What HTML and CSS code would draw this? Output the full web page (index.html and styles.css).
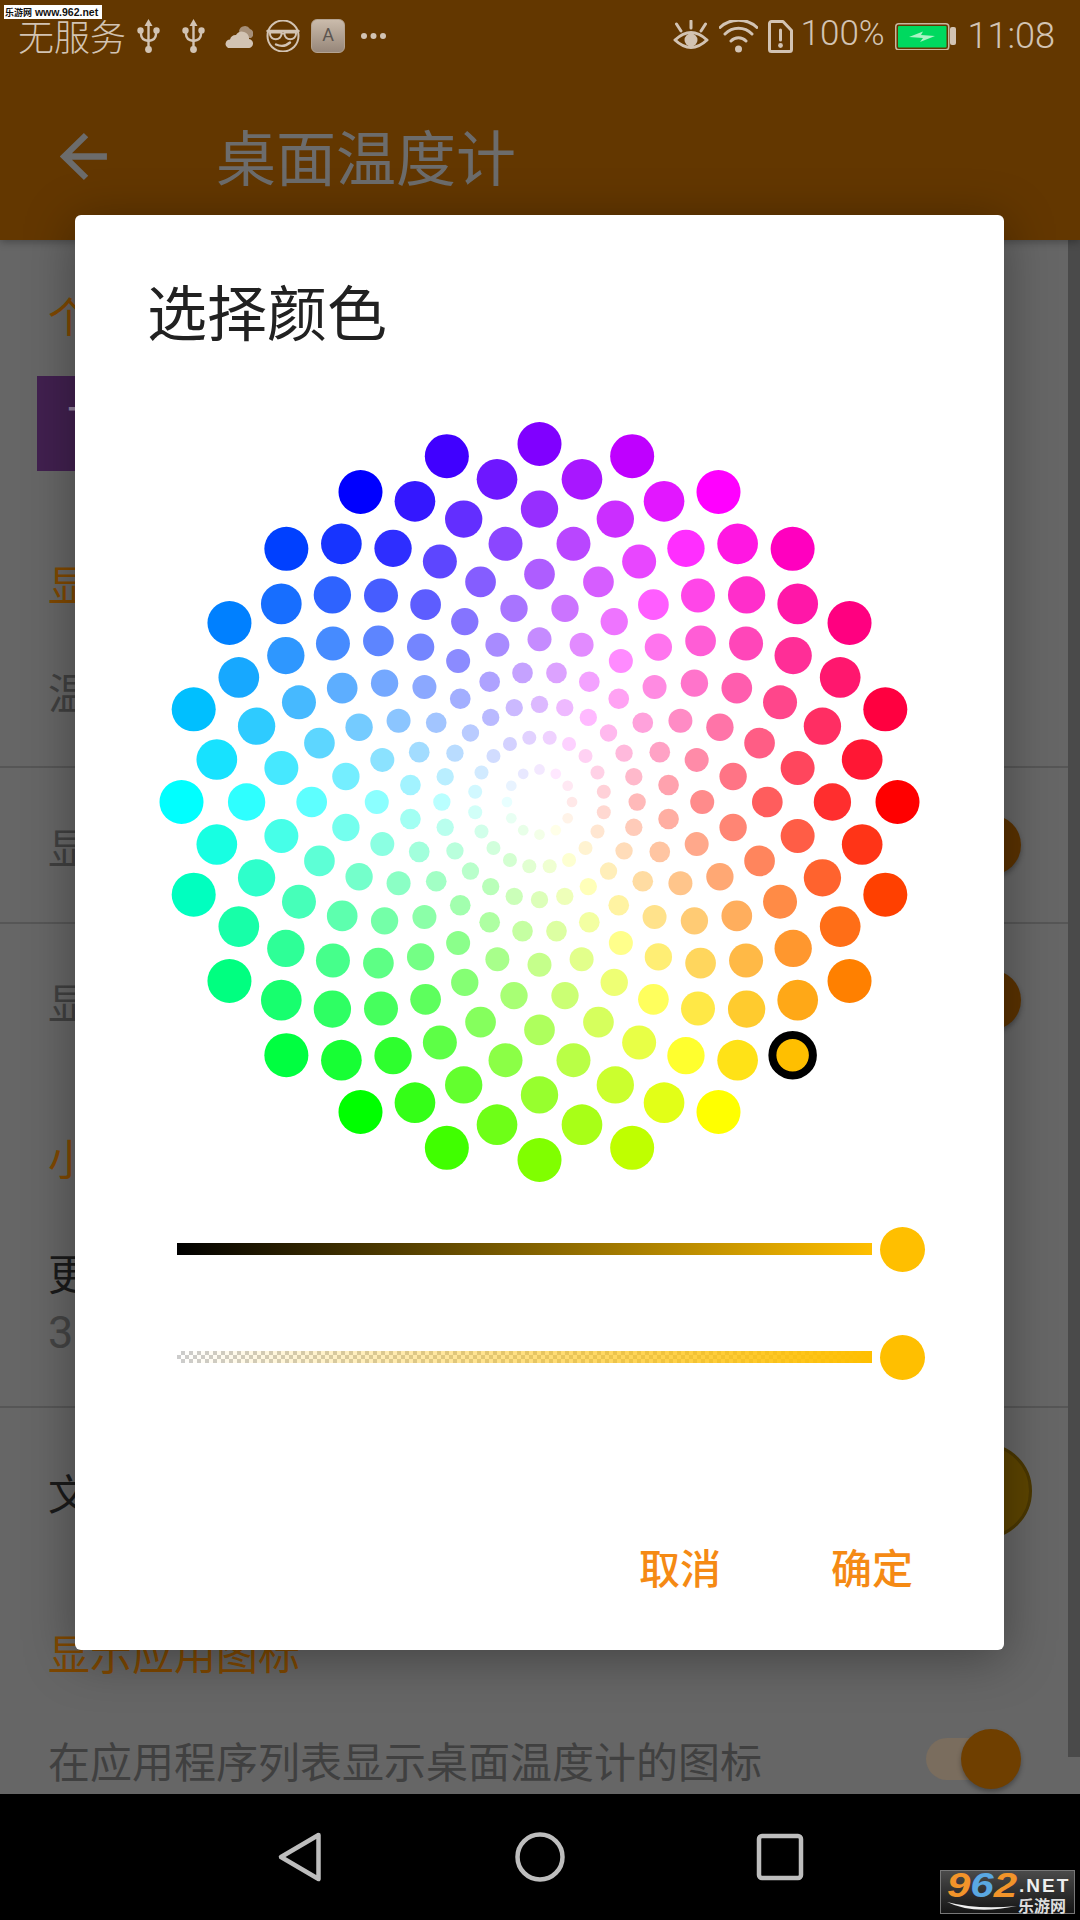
FILE: index.html
```html
<!DOCTYPE html>
<html lang="zh-CN">
<head>
<meta charset="utf-8">
<title>选择颜色</title>
<link rel="stylesheet" href="styles.css">
</head>
<body>
<div class="screen">
  <header class="appbar">
    <div class="status">
      <div class="status-group">
        <span class="carrier">无服务</span>
        <svg class="ic-usb ic-usb-a" viewBox="0 0 23 34"><path class="s2" d="M11.5 4V30M4 12v3q0 6 7.5 7q7.5-1 7.5-7v-3"/><path class="f" d="M11.5 0L7.5 7H15.5Z"/><circle class="f" cx="11.5" cy="30.5" r="3.4"/><circle class="f" cx="3.5" cy="11.5" r="3.2"/><circle class="f" cx="19.5" cy="11.5" r="3.2"/></svg>
        <svg class="ic-usb ic-usb-b" viewBox="0 0 23 34"><path class="s2" d="M11.5 4V30M4 12v3q0 6 7.5 7q7.5-1 7.5-7v-3"/><path class="f" d="M11.5 0L7.5 7H15.5Z"/><circle class="f" cx="11.5" cy="30.5" r="3.4"/><circle class="f" cx="3.5" cy="11.5" r="3.2"/><circle class="f" cx="19.5" cy="11.5" r="3.2"/></svg>
        <svg class="ic-cloud" viewBox="0 0 30 23"><path class="f-back" d="M16 6a6 6 0 0 1 11-2a5 5 0 0 1 1 9h-9z"/><path class="f" d="M5 23h20a4.500 4.500 0 0 0 1-9a7 7 0 0 0-13-4a6 6 0 0 0-6 4.500a4.500 4.500 0 0 0-2 8.500z"/></svg>
        <svg class="ic-face" viewBox="0 0 34 32"><circle class="s1" cx="17" cy="16" r="15.500"/><path class="s2" d="M1.500 11H32.500"/><path class="s1" d="M4 12.500h11.500v1.500a5 4.500 0 0 1-11.500 0zM18.500 12.500H30v1.500a5 4.500 0 0 1-11.500 0zM15.500 13.500h3"/><path class="s2" d="M10 24.500q8 3.500 14-2"/></svg>
        <span class="ic-app">A</span>
        <svg class="ic-more" viewBox="0 0 25 8"><circle class="f" cx="3" cy="4" r="3"/><circle class="f" cx="12.500" cy="4" r="3"/><circle class="f" cx="22" cy="4" r="3"/></svg>
      </div>
      <div class="status-group">
        <svg class="ic-eye" viewBox="0 0 36 32"><path class="s3" d="M2 20q16-15 32 0q-16 15-32 0z"/><circle class="f" cx="18" cy="20" r="6.500"/><path class="s3" d="M18 1V8M3.500 4L8 11M32.500 4L28 11"/></svg>
        <svg class="ic-wifi" viewBox="0 0 39 33"><circle class="f" cx="19.500" cy="29" r="3.500"/><path class="s3" d="M12 21a10.500 10.500 0 0 1 15 0M6 14a19 19 0 0 1 27 0M1 7.500a27 27 0 0 1 37 0"/></svg>
        <svg class="ic-sim" viewBox="0 0 25 33"><path class="s3" d="M4 1.500h11l8.500 9v19a2 2 0 0 1-2 2h-18a2 2 0 0 1-2-2v-26a2 2 0 0 1 2-2z"/><path class="s3" d="M12.500 10v10"/><circle class="f" cx="12.500" cy="25.500" r="2.400"/></svg>
        <span class="pct">100%</span>
        <svg class="ic-batt" viewBox="0 0 61 27"><rect class="batt-frame" x="0.750" y="0.750" width="53" height="26" rx="3"/><rect class="batt-fill" x="3" y="3" width="48.500" height="21.500" rx="1"/><path class="batt-bolt" d="M14 14L28 8.500L26 12L40 13L25 19L28 15z"/><rect class="f" x="55" y="4" width="6" height="18" rx="2"/></svg>
        <span class="clock">11:08</span>
      </div>
    </div>
    <div class="toolbar">
      <svg class="ic-back" viewBox="0 0 47 47"><path d="M45 23.500H5M25 3L4 23.500L25 44"/></svg>
      <span class="toolbar-title">桌面温度计</span>
    </div>
  </header>

  <main class="list">
    <div class="sec sec-1">个</div>
    <div class="banner"><span class="banner-mark">一</span></div>
    <div class="sec sec-2">显</div>
    <div class="row row-a line">温</div>
    <div class="row row-b line"><span>显</span><span class="switch"><span class="knob knob-dim"></span></span></div>
    <div class="row row-c"><span>显</span><span class="switch"><span class="knob knob-dim"></span></span></div>
    <div class="sec sec-3">小</div>
    <div class="row-two line">
      <span class="two-main">更</span>
      <span class="two-sub">30</span>
    </div>
    <div class="row row-d"><span class="dark">文</span><span class="color-dot"></span></div>
    <div class="sec sec-4">显示应用图标</div>
    <div class="row row-e"><span>在应用程序列表显示桌面温度计的图标</span><span class="switch"><span class="knob"></span></span></div>
  </main>

  <nav class="navbar">
    <svg class="nav-ic" viewBox="0 0 60 60"><path d="M48.500 8L11 30L48.500 52Z"/></svg>
    <svg class="nav-ic" viewBox="0 0 60 60"><circle cx="30" cy="30" r="22.500"/></svg>
    <svg class="nav-ic" viewBox="0 0 60 60"><rect x="9" y="9" width="42" height="42" rx="3"/></svg>
  </nav>

  <div class="scrollbar"></div>

  <section class="dialog">
    <h1 class="dialog-title">选择颜色</h1>
    <svg id="wheel" class="wheel" viewBox="0 0 780 780"></svg>
    <div class="slider slider-1">
      <div class="track track-light"></div>
      <div class="thumb"></div>
    </div>
    <div class="slider slider-2">
      <div class="track track-alpha"></div>
      <div class="thumb"></div>
    </div>
    <div class="actions">
      <span class="action">取消</span>
      <span class="action">确定</span>
    </div>
  </section>

  <div class="wm-top"><span class="wm-top-cn">乐游网</span> www.962.net</div>
  <div class="wm-logo">
    <span class="wm-num"><span class="wm-or">9</span><span class="wm-bl">6</span><span class="wm-or">2</span></span>
    <span class="wm-net">.NET</span>
    <svg class="wm-swoosh" viewBox="0 0 70 12"><path d="M0 1Q26 14 70 5Q30 9 0 1Z"/></svg>
    <span class="wm-cn">乐游网</span>
  </div>
</div>
<script src="wheel.js"></script>
</body>
</html>
```
FILE: styles.css
```css
* { box-sizing: border-box; }
html, body { margin: 0; padding: 0; background: #000; }
body { font-family: "Noto Sans CJK SC", "Noto Sans", sans-serif; }

.screen { position: relative; width: 1080px; height: 1920px; overflow: hidden; background: #666; display: flex; flex-direction: column; }

/* app bar */
.appbar { height: 240px; flex: none; background: #633700; box-shadow: 0 2px 8px rgba(0,0,0,.3); position: relative; z-index: 1; }
.status { height: 72px; display: flex; justify-content: space-between; align-items: center; padding: 0 25px 0 18px; color: #d2c3b3; }
.status-group { display: flex; align-items: center; }
.carrier { font-size: 36px; font-weight: 300; line-height: 32px; width: 106px; white-space: nowrap; position: relative; top: -1px; }
.status svg { display: block; flex: none; }
.f { fill: #d2c3b3; }
.f-back { fill: #a68f78; }
.s1, .s2, .s3 { fill: none; stroke: #d2c3b3; stroke-linecap: round; stroke-linejoin: round; }
.s1 { stroke-width: 2; }
.s2 { stroke-width: 2.400; }
.s3 { stroke-width: 3; }
.ic-usb { width: 23px; height: 34px; }
.ic-usb-a { margin-left: 13px; }
.ic-usb-b { margin-left: 22px; }
.ic-cloud { width: 30px; height: 23px; margin-left: 18px; }
.ic-face { width: 34px; height: 32px; margin-left: 13px; }
.ic-app { width: 34px; height: 34px; margin-left: 11px; border-radius: 6px; background: linear-gradient(#cabbab, #97877a); border: 1px solid #b4a391; color: #5c5550; font: 18px/30px "Roboto", sans-serif; text-align: center; }
.ic-more { width: 25px; height: 8px; margin-left: 16px; }
.ic-eye { width: 36px; height: 32px; }
.ic-wifi { width: 39px; height: 33px; margin-left: 10px; }
.ic-sim { width: 25px; height: 33px; margin-left: 10px; }
.pct { font: 300 35px/40px "Roboto", sans-serif; margin-left: 8px; width: 83px; white-space: nowrap; position: relative; top: -2px; }
.ic-batt { width: 61px; height: 27px; margin-left: 11px; }
.batt-frame { fill: none; stroke: #c9b69f; stroke-width: 1.500; }
.batt-fill { fill: #00d95f; }
.batt-bolt { fill: #a9f4c5; }
.clock { font: 300 36px/40px "Roboto", sans-serif; margin-left: 12px; white-space: nowrap; }

.toolbar { height: 168px; display: flex; align-items: center; padding-left: 60px; color: #6c6c6c; }
.ic-back { width: 49px; height: 49px; flex: none; }
.ic-back path { fill: none; stroke: #6c6c6c; stroke-width: 6; }
.toolbar-title { font-size: 60px; line-height: 80px; margin-left: 107px; white-space: nowrap; position: relative; top: -1px; }

/* dimmed settings list */
.list { height: 1554px; flex: none; overflow: hidden; display: flex; flex-direction: column; color: #404040; font-size: 42px; }
.sec { height: 76px; flex: none; padding-left: 48px; display: flex; align-items: center; color: #7f4800; white-space: nowrap; }
.sec-1 { margin-top: 36px; }
.sec-2 { margin-top: 73px; }
.sec-3 { margin-top: 42px; }
.sec-4 { margin-top: 39px; }
.banner { height: 95px; width: 300px; flex: none; margin: 24px 0 0 37px; padding-left: 30px; background: #41204f; color: #97859f; display: flex; align-items: flex-start; }
.banner-mark { line-height: 62px; }
.row { flex: none; padding: 0 59px 0 48px; display: flex; align-items: center; justify-content: space-between; white-space: nowrap; }
.line { border-bottom: 2px solid #565656; }
.row-a { height: 148px; padding-bottom: 6px; }
.row-b { height: 156px; }
.row-c { height: 152px; }
.row-d { height: 166px; padding-right: 48px; }
.row-e { height: 140px; }
.row-two { height: 214px; flex: none; padding: 52px 0 0 48px; display: flex; flex-direction: column; }
.two-main { line-height: 52px; color: #1a1a1a; }
.two-sub { font: 45px/52px "Roboto", sans-serif; margin-top: 9px; color: #444; }
.dark { color: #1a1a1a; }
.switch { position: relative; width: 95px; height: 42px; border-radius: 21px; background: #7a6d5e; flex: none; }
.knob { position: absolute; right: 0; top: -9px; width: 60px; height: 60px; border-radius: 50%; background: #6f3f00; box-shadow: 0 3px 5px rgba(0,0,0,.3); }
.knob-dim { background: #5a3200; }
.color-dot { width: 96px; height: 96px; border-radius: 50%; background: #5c4400; border: 3px solid #4a3700; flex: none; }

.scrollbar { position: absolute; right: 0; top: 240px; width: 12px; height: 1517px; background: #4a4a4a; }

/* nav bar */
.navbar { height: 126px; flex: none; background: #000; display: flex; align-items: center; justify-content: center; gap: 180px; position: relative; }
.nav-ic { width: 60px; height: 60px; }
.nav-ic * { fill: none; stroke: #bdbdbd; stroke-width: 4.500; stroke-linejoin: round; }

/* dialog */
.dialog { position: absolute; left: 75px; top: 215px; width: 929px; height: 1435px; background: #fff; border-radius: 6px; box-shadow: 0 8px 50px rgba(0,0,0,.35); display: flex; flex-direction: column; z-index: 2; }
.dialog-title { margin: 55px 0 0 72px; font-size: 60px; line-height: 80px; font-weight: 400; color: #212121; }
.wheel { display: block; width: 780px; height: 780px; margin: 62px auto 0; flex: none; }
.slider { display: flex; align-items: center; gap: 8px; height: 44px; padding-left: 102px; flex: none; }
.slider-1 { margin-top: 35px; }
.slider-2 { margin-top: 64px; }
.track { width: 695px; height: 12px; }
.track-light { background: linear-gradient(to right, #000, #ffbf00); }
.track-alpha { background: linear-gradient(to right, rgba(255,191,0,0), #ffbf00), repeating-conic-gradient(#ccc 0 25%, #fff 0 50%) 0 0 / 8px 8px; }
.thumb { width: 45px; height: 45px; border-radius: 50%; background: #ffbf00; flex: none; }
.actions { margin-top: auto; padding: 0 91px 59px 0; display: flex; justify-content: flex-end; gap: 110px; }
.action { font-size: 41px; line-height: 50px; font-weight: 500; color: #f58a14; }

/* watermarks */
.wm-top { position: absolute; left: 4px; top: 5px; width: 98px; height: 14px; background: #fff; color: #111; font: bold 10.500px/14px "Liberation Sans", sans-serif; white-space: nowrap; padding-left: 1px; z-index: 3; }
.wm-top-cn { font: bold 9px/14px "Noto Sans CJK SC", sans-serif; }
.wm-logo { position: absolute; left: 940px; top: 1870px; width: 135px; height: 44px; background: linear-gradient(#4a4a4a, #151515); border: 1px solid #777; z-index: 3; }
.wm-num { position: absolute; left: 6px; top: 0; font: italic bold 35px/28px "Liberation Sans", sans-serif; transform: scaleX(1.2); transform-origin: left center; }
.wm-or { color: #f2942a; }
.wm-bl { color: #5aa8e2; }
.wm-net { position: absolute; left: 78px; top: 5px; font: bold 19px/20px "Liberation Sans", sans-serif; letter-spacing: 2px; color: #eee; }
.wm-cn { position: absolute; left: 77px; top: 26px; font: bold 16px/16px "Noto Sans CJK SC", sans-serif; color: #ddd; white-space: nowrap; }
.wm-swoosh { position: absolute; left: 6px; top: 30px; width: 70px; height: 12px; }
.wm-swoosh path { fill: #eee; }
```
FILE: wheel.js
```js
// Flower colour wheel: rings of dots whose hue follows the angle and saturation the radius.
(function () {
  var svg = document.getElementById('wheel');
  var NS = 'http://www.w3.org/2000/svg';
  var density = 12, half = 390, maxRadius = 358, cSize = 16.67, stroke = 3;
  var cx = 389.5;
  function hsv(h, s) {
    function f(n) {
      var k = (n + h / 60) % 6;
      return Math.round(255 * (1 - s * Math.max(0, Math.min(k, 4 - k, 1))));
    }
    return 'rgb(' + f(5) + ',' + f(3) + ',' + f(1) + ')';
  }
  for (var i = 1; i < density; i++) {
    var radius = maxRadius * i / (density - 1);
    var size = cSize + cSize * 1.2 * (i - density / 2) / density;
    var total = Math.min(Math.floor(0.975 * Math.PI / Math.asin(size / radius) + 0.5), density * 2);
    for (var j = 0; j < total; j++) {
      var angle = Math.PI * 2 * j / total + (Math.PI / total) * ((i + 1) % 2);
      var c = document.createElementNS(NS, 'circle');
      c.setAttribute('cx', (cx + radius * Math.cos(angle)).toFixed(2));
      c.setAttribute('cy', (half + radius * Math.sin(angle)).toFixed(2));
      var hue = angle * 180 / Math.PI;
      c.setAttribute('fill', hsv(hue, radius / maxRadius));
      if (i === 11 && j === 3) {
        c.setAttribute('r', '20.25');
        c.setAttribute('stroke', '#000');
        c.setAttribute('stroke-width', '8');
      } else {
        c.setAttribute('r', (size - stroke).toFixed(2));
      }
      svg.appendChild(c);
    }
  }
})();
```
